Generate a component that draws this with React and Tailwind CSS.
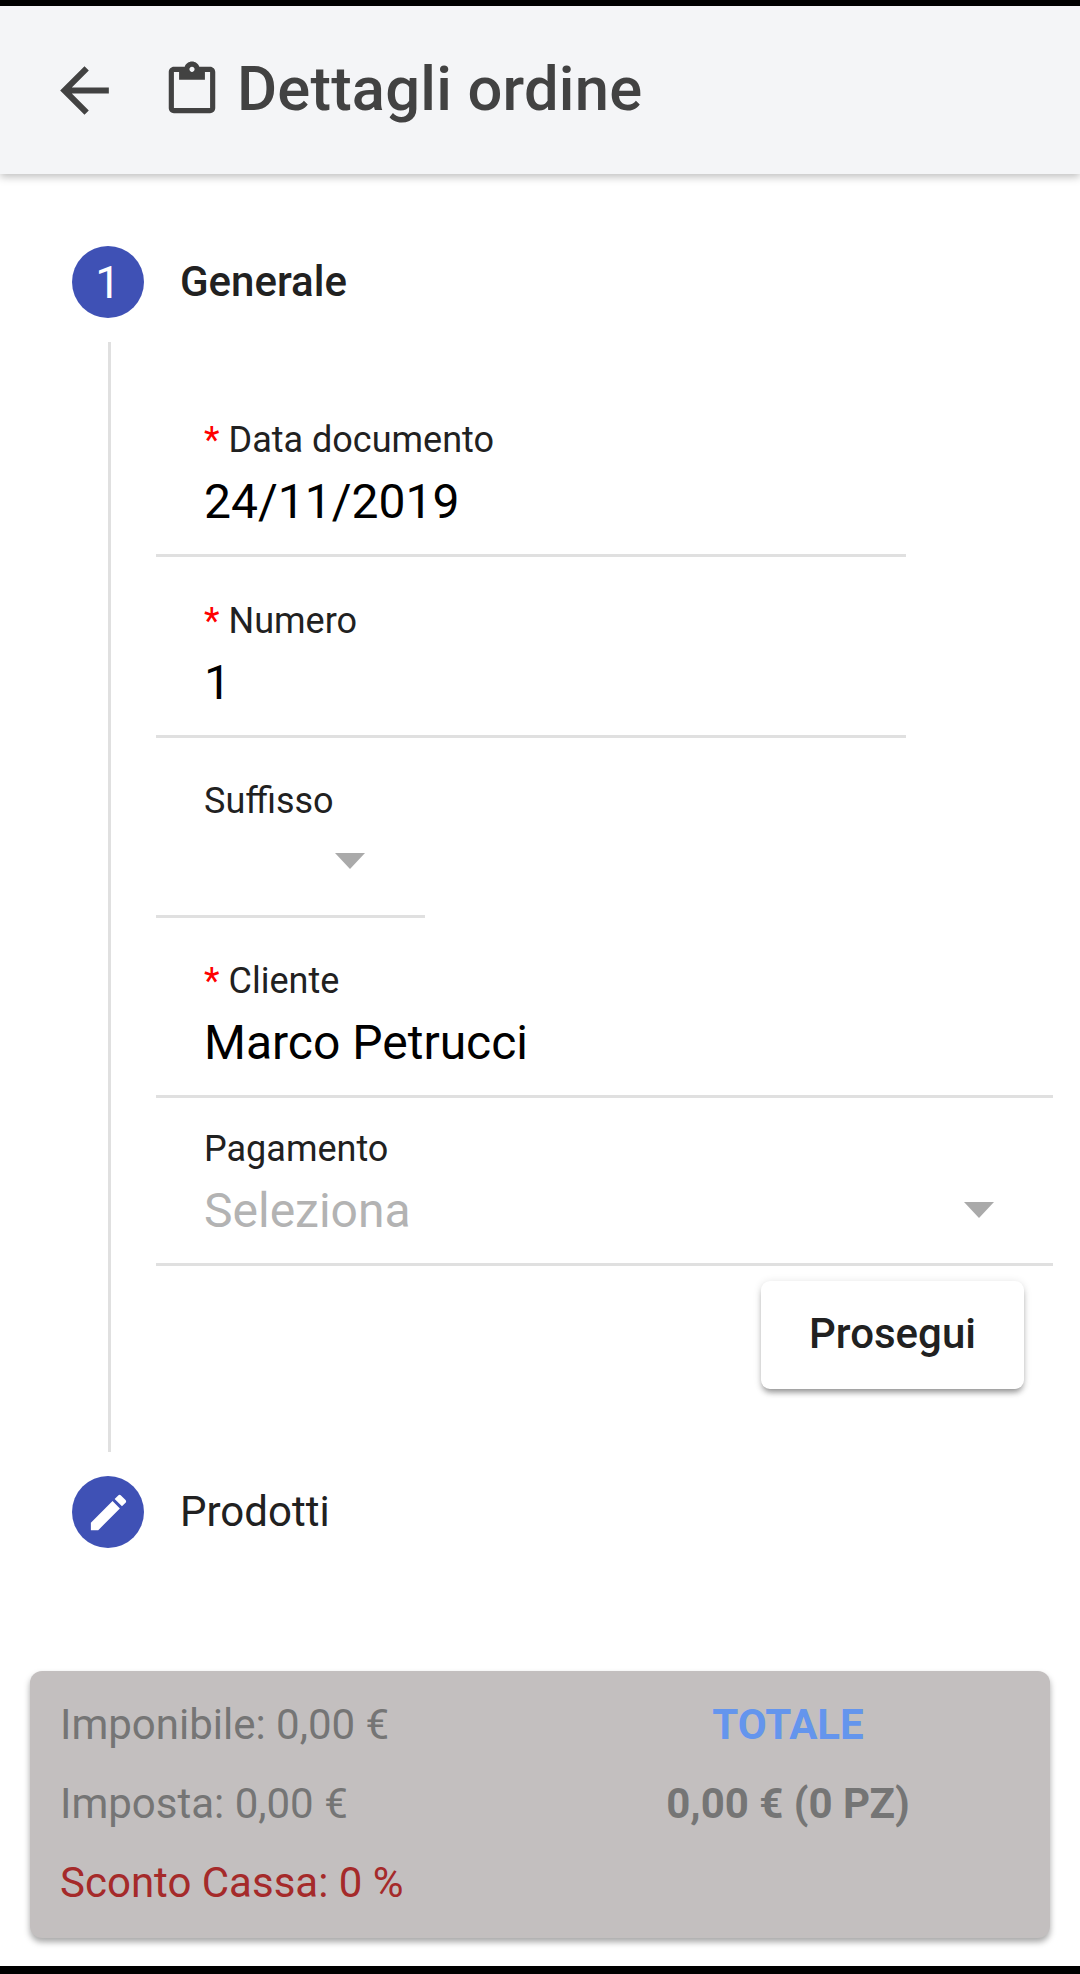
import React from "react";

function Field({ label, required, value, placeholder, width, height, caret, caretClass }) {
  return (
    <div className={`${width} ${height} relative border-b-[3px] border-[#e0e0e0] pl-12 flex flex-col justify-end pb-[23px]`}>
      <div className="text-[36px] leading-[44px] text-[#212121]">
        {required && <span className="text-[#ff0000] mr-[9px]">*</span>}
        {label}
      </div>
      <div className={`mt-[11px] text-[48px] leading-[58px] h-[58px] ${placeholder ? "text-[#b3b3b3]" : "text-black"}`}>
        {value || placeholder}
      </div>
      {caret && (
        <div className={`absolute ${caretClass} w-0 h-0 border-l-[15px] border-r-[15px] border-t-[16px] border-l-transparent border-r-transparent border-t-[#aaaaaa]`} />
      )}
    </div>
  );
}

export default function App() {
  return (
    <div className="w-[1080px] h-[1974px] bg-white flex flex-col font-['Roboto',sans-serif] overflow-hidden">
      <div className="h-[6px] bg-black shrink-0" />
      <header className="h-[168px] shrink-0 bg-[#f4f5f7] shadow-[0_3px_8px_rgba(0,0,0,0.25)] flex items-center pl-[48px] relative z-10">
        <svg width="73" height="73" viewBox="0 0 24 24" fill="#424242" className="shrink-0">
          <path d="M20 11H7.83l5.59-5.59L12 4l-8 8 8 8 1.41-1.41L7.83 13H20v-2z" />
        </svg>
        <svg width="62" height="62" viewBox="0 0 24 24" fill="#424242" className="ml-[40px] shrink-0">
          <path d="M19 3h-4.18C14.4 1.84 13.3 1 12 1s-2.4.84-2.82 2H5c-1.1 0-2 .9-2 2v14c0 1.1.9 2 2 2h14c1.1 0 2-.9 2-2V5c0-1.1-.9-2-2-2zm-7 0c.55 0 1 .45 1 1s-.45 1-1 1-1-.45-1-1 .45-1 1-1zm7 16H5V5h2v3h10V5h2v14z" />
        </svg>
        <h1 className="ml-[14px] text-[61.5px] leading-none font-medium text-[#424242] tracking-[0.2px]">Dettagli ordine</h1>
      </header>

      <main className="flex flex-col pl-[72px] pt-[72px]">
        <div className="flex items-center h-[72px]">
          <div className="w-[72px] h-[72px] rounded-full bg-[#3f51b5] text-white text-[45px] flex items-center justify-center pt-[2px]">1</div>
          <div className="ml-[36px] text-[42px] font-medium text-[#212121] pb-[2px]">Generale</div>
        </div>

        <div className="mt-[24px] ml-[36px] border-l-[3px] border-[#e0e0e0] h-[1110px] pl-[45px]">
          <div className="flex flex-col items-start">
            <Field required label="Data documento" value="24/11/2019" width="w-[750px]" height="h-[215px]" />
            <Field required label="Numero" value="1" width="w-[750px]" height="h-[181px]" />
            <Field label="Suffisso" width="w-[269px]" height="h-[180px]" caret caretClass="right-[60px] top-[115px]" />
            <Field required label="Cliente" value="Marco Petrucci" width="w-[897px]" height="h-[180px]" />
            <Field label="Pagamento" placeholder="Seleziona" width="w-[897px]" height="h-[168px]" caret caretClass="right-[59px] top-[104px]" />
          </div>
          <div className="w-[868px] flex justify-end mt-[15px]">
            <button className="w-[263px] h-[108px] pb-[4px] rounded-[9px] bg-white shadow-[0_5px_6px_-2px_rgba(0,0,0,0.4),0_1px_8px_rgba(0,0,0,0.12)] text-[42px] font-medium text-[#212121]">Prosegui</button>
          </div>
        </div>

        <div className="flex items-center h-[72px] mt-[24px]">
          <div className="w-[72px] h-[72px] rounded-full bg-[#3f51b5] flex items-center justify-center">
            <svg width="47" height="47" viewBox="0 0 24 24" fill="#fff">
              <path d="M3 17.25V21h3.75L17.81 9.94l-3.75-3.75L3 17.25zM20.71 7.04c.39-.39.39-1.02 0-1.41l-2.34-2.34c-.39-.39-1.02-.39-1.41 0l-1.83 1.83 3.75 3.75 1.83-1.83z" />
            </svg>
          </div>
          <div className="ml-[36px] text-[42px] text-[#212121] pb-[2px]">Prodotti</div>
        </div>
      </main>

      <section className="mt-[123px] mx-[30px] w-[1020px] h-[267px] shrink-0 rounded-[12px] bg-[#c3bfbf] shadow-[0_4px_6px_rgba(0,0,0,0.35)] pl-[30px] pt-[14px] flex">
        <div className="flex flex-col text-[42px] text-[#757575] w-[578px]">
          <div className="h-[79px] leading-[79px]">Imponibile: 0,00 €</div>
          <div className="h-[79px] leading-[79px]">Imposta: 0,00 €</div>
          <div className="h-[79px] leading-[79px] text-[#a52a2a]">Sconto Cassa: 0 %</div>
        </div>
        <div className="flex flex-col w-[300px] items-center text-[42px] font-bold">
          <div className="h-[79px] leading-[79px] text-[#6495ed]">TOTALE</div>
          <div className="h-[79px] leading-[79px] text-[#757575] whitespace-nowrap">0,00 € (0 PZ)</div>
        </div>
      </section>

      <div className="mt-auto h-[8px] bg-black shrink-0" />
    </div>
  );
}
